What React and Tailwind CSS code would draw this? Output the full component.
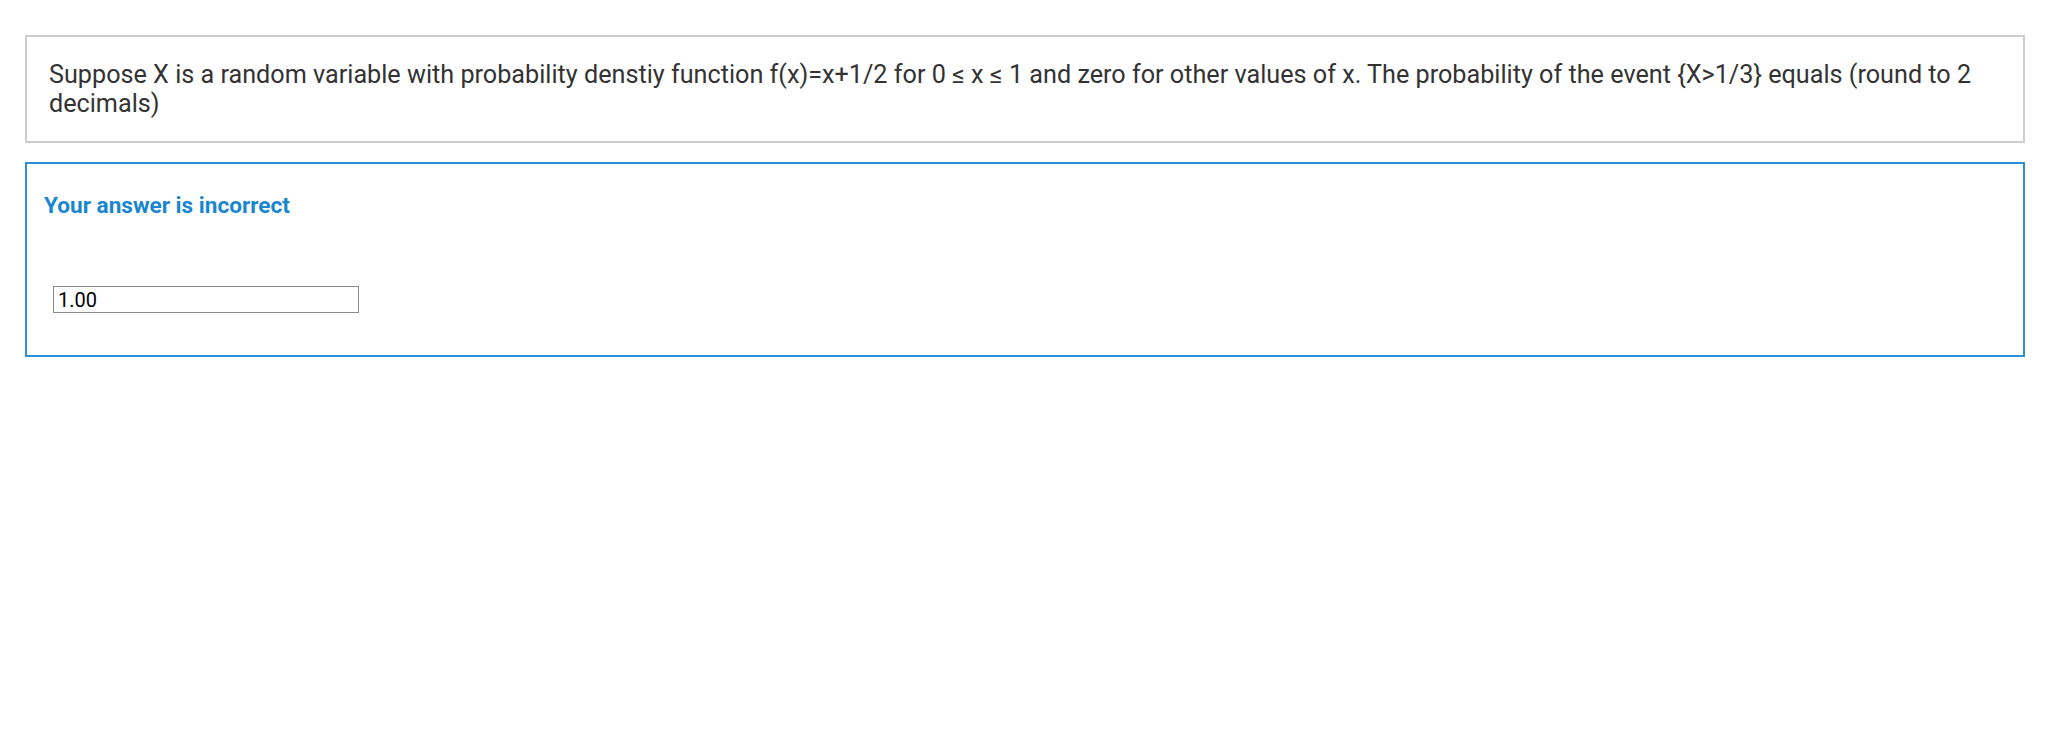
export default function App() {
  return (
    <div className="min-h-screen bg-white px-[25px] pt-[35px] font-['Roboto',sans-serif]">
      <div className="border-2 border-[#cdcdcd] pl-[22px] pr-[22px] pt-[23px] pb-[23px]">
        <p className="text-[25.2px] leading-[29px] text-[#333333]">
          Suppose X is a random variable with probability denstiy function f(x)=x+1/2 for 0 ≤ x ≤ 1 and zero for other values of x. The probability of the event {'{'}X&gt;1/3{'}'} equals (round to 2 decimals)
        </p>
      </div>

      <div className="mt-[19px] border-2 border-[#2e90d6] pl-[17px] pr-[17px] pt-[28px] pb-[42px]">
        <h2 className="text-[22.6px] leading-[27px] font-bold text-[#1a86cf]">Your answer is incorrect</h2>
        <div className="mt-[67px] pl-[9px]">
          <input
            type="text"
            defaultValue="1.00"
            readOnly
            className="block w-[306px] h-[27px] border border-[#8a8a8a] px-[4px] text-[20px] leading-[25px] text-black outline-none"
          />
        </div>
      </div>
    </div>
  )
}
